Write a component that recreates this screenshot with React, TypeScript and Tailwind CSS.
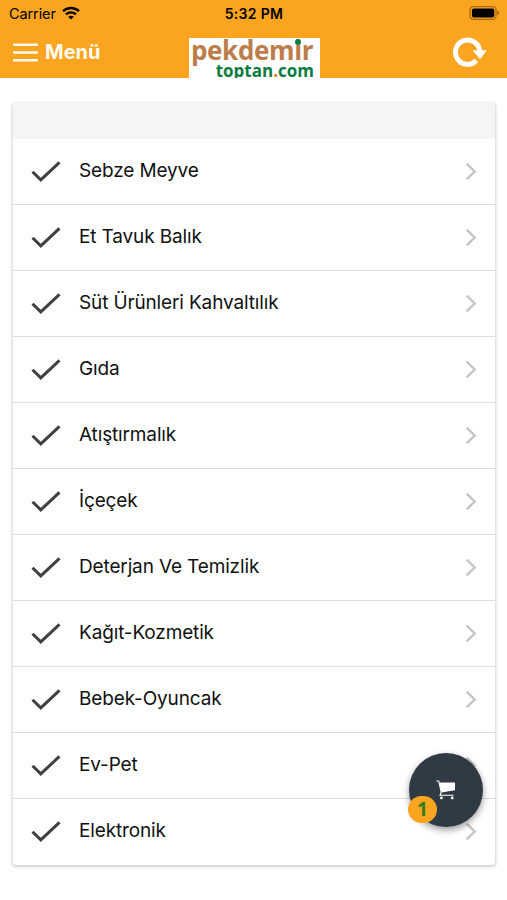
import { ReactNode } from 'react';

const categories = [
  { id: 'sebze-meyve', title: 'Sebze Meyve' },
  { id: 'et-tavuk-balik', title: 'Et Tavuk Balık' },
  { id: 'sut-urunleri', title: 'Süt Ürünleri Kahvaltılık' },
  { id: 'gida', title: 'Gıda' },
  { id: 'atistirmalik', title: 'Atıştırmalık' },
  { id: 'icecek', title: 'İçeçek' },
  { id: 'deterjan', title: 'Deterjan Ve Temizlik' },
  { id: 'kagit-kozmetik', title: 'Kağıt-Kozmetik' },
  { id: 'bebek-oyuncak', title: 'Bebek-Oyuncak' },
  { id: 'ev-pet', title: 'Ev-Pet' },
  { id: 'elektronik', title: 'Elektronik' },
];

function StatusBar() {
  return (
    <div className="grid h-7 grid-cols-3 items-center pl-[9px] pr-[7px] text-black">
      <div className="flex items-center gap-[6px]">
        <span className="text-[14.5px] tracking-[-0.1px]">Carrier</span>
        <svg className="-mt-[2px]" width="18" height="14" viewBox="0 0 18 14" fill="none" stroke="currentColor" strokeWidth="2.4">
          <path d="M1 5.2C5.5 0.9 12.5 0.9 17 5.2" />
          <path d="M4 8.3C6.8 5.7 11.2 5.7 14 8.3" />
          <path d="M9 13.6L6.2 10.7C7.8 9.3 10.2 9.3 11.8 10.7Z" fill="currentColor" stroke="none" />
        </svg>
      </div>
      <span className="-mt-px pr-px text-center text-[14px] font-semibold tracking-[0.3px]">5:32 PM</span>
      <svg className="-mt-[2px] justify-self-end" width="31" height="14" viewBox="0 0 31 14">
        <rect x="0.9" y="0.7" width="26.2" height="12.6" rx="3.6" fill="none" stroke="#a5690f" strokeWidth="1.2" />
        <rect x="2.9" y="2.5" width="22.4" height="9" rx="2" fill="#000" />
        <path d="M28.4 4.8C30.9 5.6 30.9 8.4 28.4 9.2Z" fill="#a5690f" />
      </svg>
    </div>
  );
}

function Logo() {
  return (
    <div className="relative mt-[10px] h-10 w-[131px] overflow-hidden bg-white font-['Open_Sans',sans-serif] font-bold">
      <div className="ml-[2px] mt-[-3px] h-[26px] whitespace-nowrap text-[26px] leading-[30px] tracking-[-0.35px] text-[#bd7d4b]">
        pekdemir
      </div>
      <div className="mr-[6px] text-right text-[17px] leading-[19px] text-[#0d7c3f]">
        toptan<span className="text-[#e0762b]">.</span>com
      </div>
      {/* green dot over the i */}
      <span className="absolute left-[106px] top-[1px] size-[6px] rounded-full bg-[#0d7c3f]" />
    </div>
  );
}

function Header() {
  return (
    <header className="h-[78px] bg-[#fba41f]">
      <StatusBar />
      <div className="grid h-[50px] grid-cols-[1fr_131px_1fr] pl-[13px] pr-[11px]">
        <div className="flex h-12 items-center gap-[7px] text-[#fffaf0]">
          <svg width="25" height="19" viewBox="0 0 25 19" stroke="currentColor" strokeWidth="2.5">
            <path d="M0 1.8H25M0 9.5H25M0 17.3H25" />
          </svg>
          <span className="text-[20px] font-bold">Menü</span>
        </div>
        <Logo />
        <svg className="mr-[9px] mt-[9px] justify-self-end" width="34" height="31" viewBox="0 0 34 31">
          <path d="M23.5 23.6A12.2 12.2 0 1 1 26.8 13.8" fill="none" stroke="#fff" strokeWidth="5" />
          <path d="M19.5 13.3H34L27 22.2Z" fill="#fff" />
        </svg>
      </div>
    </header>
  );
}

function CategoryRow({ children }: { children: ReactNode }) {
  return (
    <li className="flex h-[66px] items-center border-b border-[#dedede] px-[18px] last:border-transparent">
      <svg className="shrink-0" width="30" height="21" viewBox="0 0.5 30 21" fill="none" stroke="#404040" strokeWidth="3">
        <path d="M1.5 11.3L9.8 19.4L28.5 1.8" />
      </svg>
      <span className="ml-[18px] flex-1 text-[19px] tracking-[-0.14px] text-[#111]">{children}</span>
      <svg width="12" height="17" viewBox="0 0 12 17" fill="none" stroke="#c4c4c4" strokeWidth="2.4">
        <path d="M1.7 0.7L9.7 8.5L1.7 16.3" />
      </svg>
    </li>
  );
}

function CartButton() {
  return (
    <button className="absolute left-[409px] top-[753px] flex size-[74px] items-center justify-center rounded-full bg-[#303a45] shadow-[0_3px_7px_rgba(0,0,0,0.4)]">
      <svg width="20" height="20" viewBox="0 0 20 20">
        <path d="M3.2 2.6H19V10.2L5.4 12.6Z" fill="#fff" />
        <path d="M0.4 1H2.7L5.2 12.4L4 15.3H17.6" fill="none" stroke="#fff" strokeWidth="1.1" />
        <circle cx="5.4" cy="17.9" r="1.4" fill="#fff" />
        <circle cx="16.2" cy="17.9" r="1.4" fill="#fff" />
      </svg>
      <span className="absolute -left-px top-[43px] flex h-[27px] w-[29px] items-center justify-center rounded-full bg-[#fba41f] font-['Open_Sans',sans-serif] text-[19px] font-bold text-[#2f7d1c]">
        1
      </span>
    </button>
  );
}

export default function App() {
  return (
    <div className="relative h-[900px] w-[507px] overflow-hidden bg-white font-['Inter',sans-serif]">
      <Header />
      <main className="pl-[13px] pr-[12px] pt-[25px]">
        <section className="overflow-hidden rounded-[3px] bg-white shadow-[0_1px_3px_1px_rgba(0,0,0,0.18)]">
          <div className="h-9 bg-[#f5f5f5]" />
          <ul>
            {categories.map((category) => (
              <CategoryRow key={category.id}>{category.title}</CategoryRow>
            ))}
          </ul>
        </section>
      </main>
      <CartButton />
    </div>
  );
}
